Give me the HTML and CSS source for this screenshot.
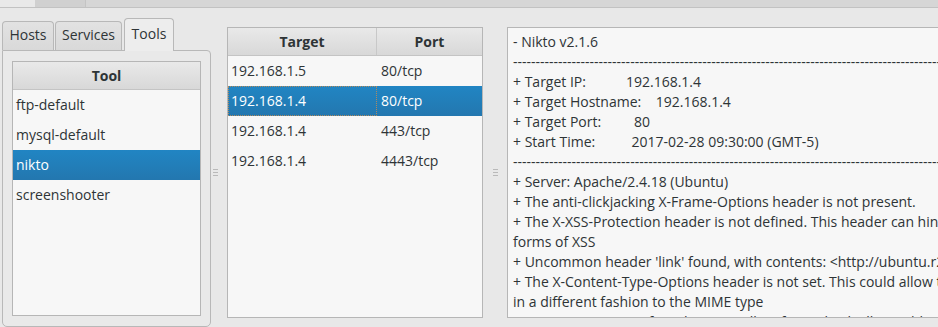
FILE: index.html
```html
<!DOCTYPE html>
<html>
<head>
<meta charset="utf-8">
<link rel="stylesheet" href="styles.css">
</head>
<body>
<div class="topbar"><div class="tb-left"></div><div class="tb-seg"></div><div class="tb-rest"></div></div>
<div class="main">
  <div class="leftcol">
    <div class="tabs">
      <div class="tab">Hosts</div>
      <div class="tab">Services</div>
      <div class="tab active">Tools</div>
    </div>
    <div class="pane">
      <div class="list">
        <div class="hdr"><div class="hcell full">Tool</div></div>
        <div class="row"><div class="cell">ftp-default</div></div>
        <div class="row"><div class="cell">mysql-default</div></div>
        <div class="row sel"><div class="cell">nikto</div></div>
        <div class="row"><div class="cell">screenshooter</div></div>
      </div>
    </div>
  </div>
  <div class="split s1"><div class="grip"></div></div>
  <div class="table">
    <div class="hdr"><div class="hcell c1">Target</div><div class="hcell c2">Port</div></div>
    <div class="row"><div class="cell c1">192.168.1.5</div><div class="cell c2">80/tcp</div></div>
    <div class="row sel"><div class="cell c1 focus">192.168.1.4</div><div class="cell c2">80/tcp</div></div>
    <div class="row"><div class="cell c1">192.168.1.4</div><div class="cell c2">443/tcp</div></div>
    <div class="row"><div class="cell c1">192.168.1.4</div><div class="cell c2">4443/tcp</div></div>
  </div>
  <div class="split s2"><div class="grip"></div></div>
  <div class="output">
<div class="ln">- Nikto v2.1.6</div>
<div class="ln">---------------------------------------------------------------------------------------------------------------</div>
<div class="ln">+ Target IP:           192.168.1.4</div>
<div class="ln">+ Target Hostname:    192.168.1.4</div>
<div class="ln">+ Target Port:         80</div>
<div class="ln">+ Start Time:          2017-02-28 09:30:00 (GMT-5)</div>
<div class="ln">---------------------------------------------------------------------------------------------------------------</div>
<div class="ln">+ Server: Apache/2.4.18 (Ubuntu)</div>
<div class="ln">+ The anti-clickjacking X-Frame-Options header is not present.</div>
<div class="ln">+ The X-XSS-Protection header is not defined. This header can hint to the user agent to protect against some</div>
<div class="ln">forms of XSS</div>
<div class="ln">+ Uncommon header 'link' found, with contents: &lt;http://ubuntu.r2s.local/index.php?rest_route=/&gt;; rel="https://api.w.org/"</div>
<div class="ln">+ The X-Content-Type-Options header is not set. This could allow the user agent to render the content of the site</div>
<div class="ln">in a different fashion to the MIME type</div>
<div class="ln">+ No CGI Directories found (use '-C all' to force check all possible dirs)</div>
  </div>
</div>
</body>
</html>
```
FILE: styles.css
```css
* { box-sizing: border-box; }
html, body {
  margin: 0;
  width: 938px;
  height: 327px;
  overflow: hidden;
  background: #e8e8e8;
  font-family: "Open Sans", "Noto Sans", sans-serif;
  font-size: 14px;
  color: #2e3436;
}
.topbar {
  display: flex;
  height: 8px;
  border-bottom: 1px solid #c2c2c2;
  background: #d6d6d6;
}
.tb-left { width: 35px; background: #e9e9e9; }
.tb-seg { width: 51px; background: #d0d0d0; border-right: 1px solid #c4c4c4; }
.tb-rest { flex: 1; }

.main {
  display: flex;
  align-items: flex-start;
  height: 319px;
}
.leftcol {
  margin-left: 2px;
  padding-top: 10px;
  width: 209px;
  flex: none;
}
.tabs {
  display: flex;
  align-items: flex-end;
  height: 32px;
  gap: 1px;
}
.tab {
  height: 29px;
  padding: 0 6px;
  border: 1px solid #b8b8b8;
  border-bottom: none;
  border-radius: 4px 4px 0 0;
  background: linear-gradient(#e2e2e2, #d9d9d9);
  line-height: 26px;
  text-align: center;
}
.tab:first-child { width: 52px; }
.tab:nth-child(2) { width: 67px; }
.tab.active {
  margin-left: 1px;
  width: 50px;
  height: 33px;
  margin-bottom: -1px;
  background: #ededed;
  line-height: 29px;
  position: relative;
  z-index: 1;
}
.pane {
  height: 277px;
  border: 1px solid #b8b8b8;
  border-radius: 0 4px 5px 5px;
  padding: 10px 9px;
  background: #e9e9e9;
}
.list {
  height: 255px;
  border: 1px solid #b6b6b6;
  background: #f7f7f7;
}
.hdr {
  display: flex;
  height: 28px;
  border-bottom: 1px solid #c4c4c4;
  background: linear-gradient(#e9e9e9, #d8d8d8);
  font-weight: bold;
  line-height: 27px;
}
.hcell { text-align: center; }
.hcell.full { flex: 1; }
.row {
  display: flex;
  height: 30px;
  line-height: 29px;
}
.cell { padding-left: 3px; white-space: nowrap; }
.row.sel {
  background: linear-gradient(#2185c3, #2377af);
  color: #ffffff;
}

.split {
  flex: none;
  height: 291px;
  margin-top: 19px;
  position: relative;
}
.s1 { width: 16px; }
.s2 { width: 24px; }
.grip {
  position: absolute;
  top: 142px;
  width: 5px;
  height: 7px;
  border-top: 1px solid #b9b9b9;
  border-bottom: 1px solid #b9b9b9;
  background: linear-gradient(transparent 2px, #b9b9b9 2px, #b9b9b9 3px, transparent 3px);
}
.s1 .grip { left: 2px; }
.s2 .grip { left: 10px; }

.table {
  flex: none;
  width: 256px;
  height: 291px;
  margin-top: 19px;
  border: 1px solid #b6b6b6;
  background: #f7f7f7;
}
.c1 { width: 149px; }
.c2 { flex: 1; }
.hcell.c1 { border-right: 1px solid #c8c8c8; }
.cell.c2 { padding-left: 4px; }
.focus { outline: 1px dotted #b08a5e; outline-offset: -1px; }

.output {
  flex: 1;
  min-width: 0;
  height: 291px;
  margin-top: 19px;
  margin-right: -40px;
  border: 1px solid #b6b6b6;
  background: #f7f7f7;
  padding: 4px 5px;
  overflow: hidden;
}
.ln {
  white-space: pre;
  line-height: 20px;
}
```
